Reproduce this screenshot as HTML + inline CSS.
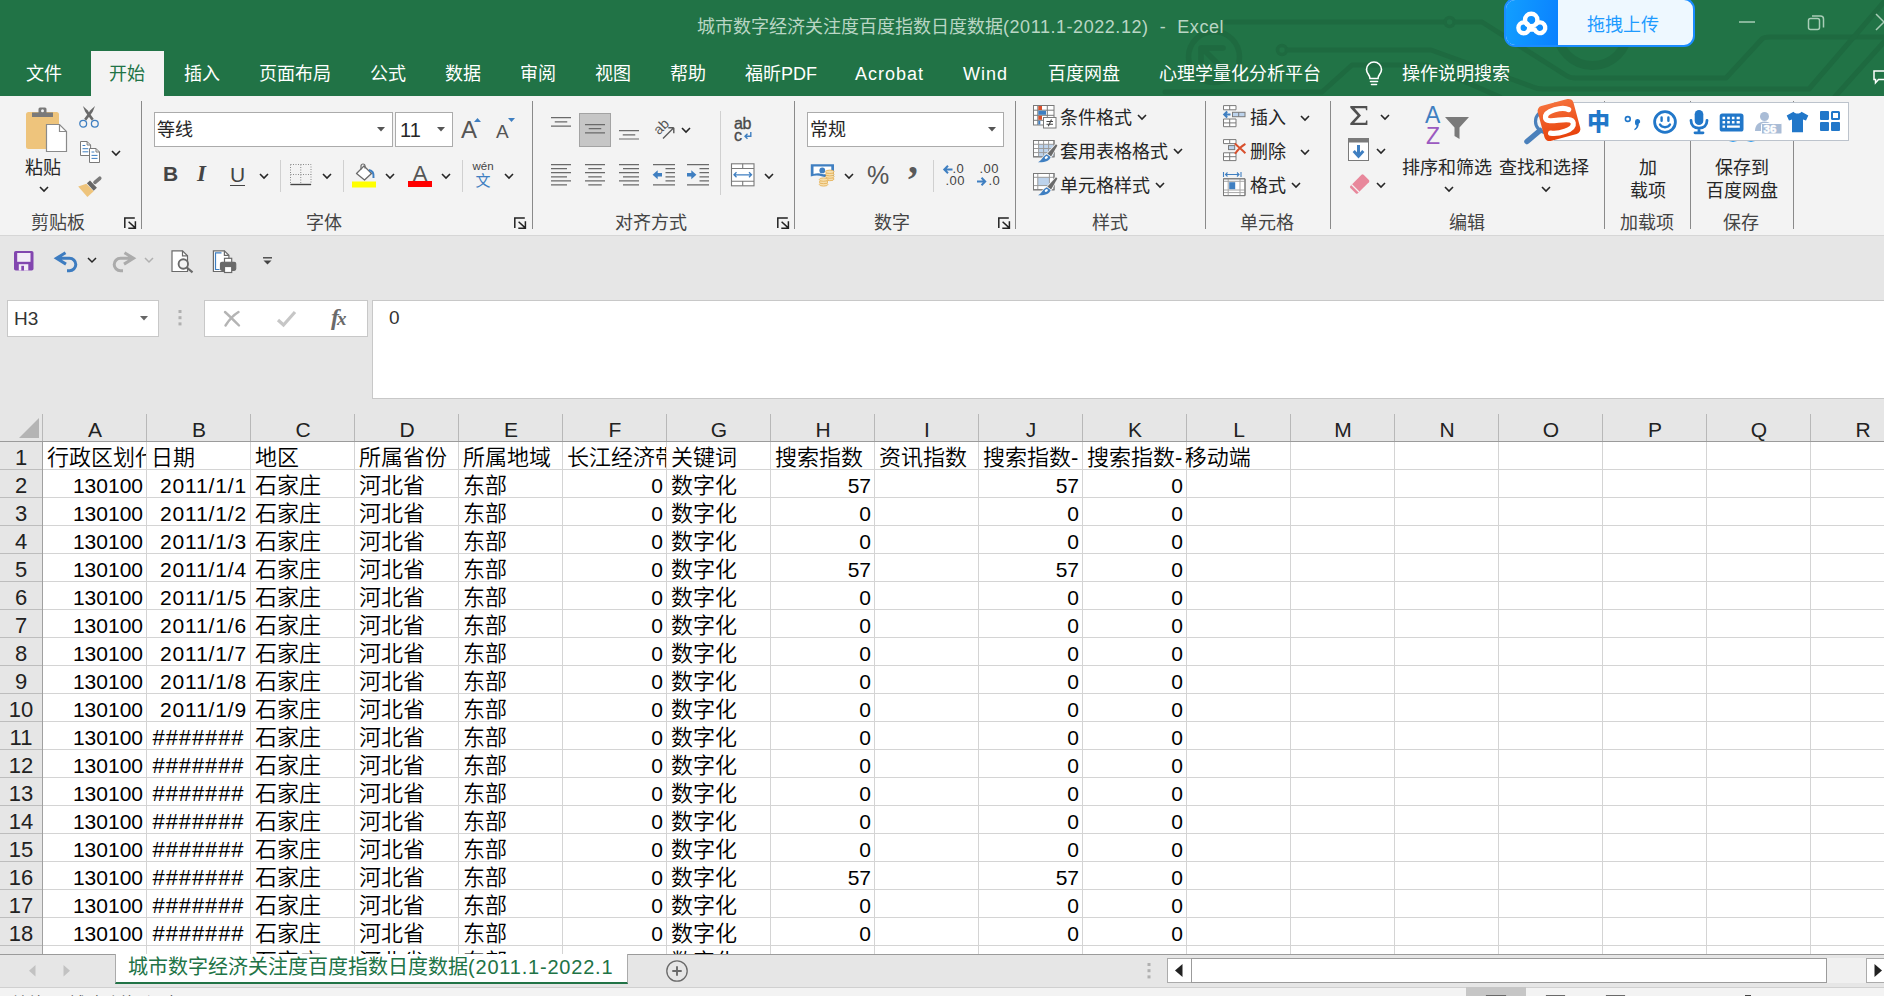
<!DOCTYPE html>
<html lang="zh-CN">
<head>
<meta charset="utf-8">
<title>城市数字经济关注度百度指数日度数据(2011.1-2022.12) - Excel</title>
<style>
*{box-sizing:border-box;margin:0;padding:0}
html,body{width:1884px;height:996px;overflow:hidden;background:#e6e6e6}
body{font-family:"Liberation Sans","Noto Sans CJK SC",sans-serif;color:#262626;position:relative}
.abs{position:absolute}
svg{position:absolute;overflow:visible}
/* ---------- title + tabs ---------- */
#top{position:absolute;left:0;top:0;width:1884px;height:96px;background:#217346;overflow:hidden}
#title{position:absolute;left:697px;top:15px;font-size:18px;line-height:24px;color:#b9d6c4;white-space:nowrap}
.tab{position:absolute;top:61px;font-size:18px;line-height:26px;color:#fff;white-space:nowrap}
#tabsel{position:absolute;left:91px;top:51px;width:73px;height:46px;background:#f3f3f3}
/* ---------- ribbon ---------- */
#ribbon{position:absolute;left:0;top:96px;width:1884px;height:140px;background:#f3f3f3;border-bottom:1px solid #d6d6d6}
.gsep{position:absolute;top:5px;width:1px;height:128px;background:#8a8a8a}
.tsep{position:absolute;width:1px;background:#d0d0d0}
.glabel{position:absolute;top:116px;font-size:18px;line-height:22px;color:#444;white-space:nowrap;transform:translateX(-50%)}
.rt{position:absolute;font-size:18px;line-height:22px;color:#262626;white-space:nowrap}
.rc{transform:translateX(-50%)}
.box{position:absolute;background:#fff;border:1px solid #ababab}
/* ---------- QAT / formula ---------- */
#qat{position:absolute;left:0;top:236px;width:1884px;height:179px;background:#e6e6e6}
/* ---------- grid ---------- */
#grid{position:absolute;left:0;top:414px;width:1884px;height:540px;background:#fff;overflow:hidden}
#colhdr{position:absolute;left:0;top:0;width:1884px;height:28px;background:#e6e6e6;border-bottom:1px solid #9b9b9b}
#rowhdr{position:absolute;left:0;top:28px;width:43px;height:512px;background:#e6e6e6;border-right:1px solid #a0a0a0}
.ch{position:absolute;top:0;width:104px;height:27px;overflow:hidden;text-align:center;font-size:21px;line-height:32px;color:#222}
.cs{position:absolute;top:0;width:1px;height:27px;background:#b8b8b8}
.rh{position:absolute;left:0;width:42px;text-align:center;font-size:22px;line-height:31px;color:#222;height:28px;overflow:hidden;border-bottom:1px solid #bdbdbd}
.vl{position:absolute;top:28px;width:1px;height:512px;background:#d4d4d4}
.hl{position:absolute;left:43px;height:1px;width:1841px;background:#d4d4d4}
.row{position:absolute;left:0;height:28px;width:1884px}
.c{position:absolute;top:0;height:27px;line-height:31px;font-size:22px;color:#000;white-space:nowrap;overflow:hidden}
.n{text-align:right;font-size:21px;padding-right:3px}
.d{letter-spacing:.85px;padding-right:3px}
.h{text-align:center;padding:0;letter-spacing:.9px;font-size:22px}
.t{padding-left:4px;font-weight:350}
/* ---------- bottom ---------- */
#tabbar{position:absolute;left:0;top:954px;width:1884px;height:33px;background:#e6e6e6;border-top:1px solid #9b9b9b}
#status{position:absolute;left:0;top:987px;width:1884px;height:9px;background:#f3f3f3;border-top:1px solid #d0d0d0}
</style>
</head>
<body>
<div id="top">
<svg width="1884" height="96" viewBox="0 0 1884 96" fill="none" stroke="#1e6a40" stroke-width="5" stroke-linecap="round" stroke-linejoin="round">
<path d="M1226 22H1443"/><circle cx="1449.6" cy="22" r="4.5" stroke-width="3.5"/><path d="M1456 22H1482L1567 76Q1570 78 1576 78H1726L1762 39Q1764 37 1770 37H1884"/>
<circle cx="1282" cy="50" r="4.5" stroke-width="3.5"/><path d="M1288 50H1431L1533 87Q1537 89 1543 89H1809L1884 2"/>
<circle cx="1214" cy="57" r="25.5" stroke-width="5.5"/><path d="M1224 70L1202 48M1201 48h22M1201 48v13" stroke-width="5.5"/>
<path d="M1165 92H1322L1352 65H1427L1500 97"/>
<path d="M1832 100L1884 42"/>
<path d="M1557 30A35.5 35.5 0 0 0 1628 30" stroke-width="9"/>
</svg>
<div id="title">城市数字经济关注度百度指数日度数据<span style="letter-spacing:.55px">(2011.1-2022.12)&nbsp; -&nbsp; Excel</span></div>
<div id="tabsel"></div>
<div class="tab" style="left:26px">文件</div>
<div class="tab" style="left:109px;color:#217346">开始</div>
<div class="tab" style="left:184px">插入</div>
<div class="tab" style="left:259px">页面布局</div>
<div class="tab" style="left:370px">公式</div>
<div class="tab" style="left:445px">数据</div>
<div class="tab" style="left:520px">审阅</div>
<div class="tab" style="left:595px">视图</div>
<div class="tab" style="left:670px">帮助</div>
<div class="tab" style="left:745px">福昕PDF</div>
<div class="tab" style="left:855px;letter-spacing:1px">Acrobat</div>
<div class="tab" style="left:963px;letter-spacing:1px">Wind</div>
<div class="tab" style="left:1048px">百度网盘</div>
<div class="tab" style="left:1159px">心理学量化分析平台</div>
<div class="tab" style="left:1402px">操作说明搜索</div>
<svg style="left:1363px;top:61px" width="22" height="26" viewBox="0 0 22 26" fill="none" stroke="#fff" stroke-width="1.6" stroke-linecap="round"><path d="M7 17.5C7 14 3.5 12.5 3.5 8.5a7.5 7.5 0 0 1 15 0C18.5 12.5 15 14 15 17.5Z"/><path d="M7.5 20.5h7M8.5 23.5h5"/></svg>
<!-- baidu netdisk drag-upload widget -->
<div class="abs" style="left:1504px;top:-2px;width:191px;height:49px;border-radius:11px;background:#eef8ff;border:2px solid #1a8cff;overflow:hidden">
<div class="abs" style="left:-2px;top:-2px;width:54px;height:49px;background:linear-gradient(100deg,#12a0ff,#0a80ff)"></div>
<div class="abs" style="left:81px;top:12px;font-size:18px;line-height:26px;color:#1e9bff;white-space:nowrap">拖拽上传</div>
</div>
<svg style="left:1514px;top:8px" width="36" height="30" viewBox="0 0 36 30" fill="none" stroke="#fff" stroke-width="4.4" stroke-linecap="round"><circle cx="17.2" cy="12" r="6.2"/><circle cx="9.8" cy="19.8" r="5.4"/><path d="M20.8 21.5a5.4 5.4 0 1 0 1.2-5.5"/><path d="M14 22.5l3.2-4.5 3.2 4.5Z" fill="#fff" stroke-width="2.5"/></svg>
<!-- window controls -->
<svg style="left:1738px;top:12px" width="150" height="22" viewBox="0 0 150 22" fill="none" stroke="#a9cdb7" stroke-width="1.5"><path d="M1 10h16"/><rect x="70.5" y="6.5" width="11" height="11" rx="2"/><path d="M74 4h8.5a3 3 0 0 1 3 3V15.5"/><path d="M138 2l16 16M154 2l-16 16"/></svg>
<svg style="left:1873px;top:69.5px" width="16" height="16" viewBox="0 0 16 16" fill="none" stroke="#fff" stroke-width="1.5"><path d="M1 1h18v8.5H5.5L2.5 12.8V9.5H1Z"/></svg>
</div>

<div id="ribbon">
<div class="gsep" style="left:141px"></div><div class="gsep" style="left:532px"></div><div class="gsep" style="left:794px"></div><div class="gsep" style="left:1015px"></div><div class="gsep" style="left:1205px"></div><div class="gsep" style="left:1330px"></div><div class="gsep" style="left:1604px"></div><div class="gsep" style="left:1690px"></div><div class="gsep" style="left:1793px"></div>
<svg style="left:24px;top:9px" width="46" height="48" viewBox="0 0 46 48">
<rect x="2" y="7" width="33" height="37" rx="2.5" fill="#eec47c"/>
<path d="M8 12h21V7.5h-6.5V4a1.5 1.5 0 0 0-1.5-1.5h-5a1.5 1.5 0 0 0-1.5 1.5V7.5H8Z" fill="#7a7a7a"/><circle cx="18.5" cy="5.8" r="1.5" fill="#f3f3f3"/>
<path d="M22.5 19.5h13l7 7V46.5h-20Z" fill="#fff" stroke="#8a8a8a" stroke-width="1.2"/><path d="M35.5 19.5v7h7" fill="none" stroke="#8a8a8a" stroke-width="1.2"/>
</svg>
<div class="rt rc" style="left:43px;top:61px">粘贴</div>
<svg style="left:39px;top:90px" width="10" height="7" viewBox="0 0 10 7" fill="none" stroke="#262626" stroke-width="1.6"><path d="M1 1l4 4l4 -4"/></svg>
<svg style="left:78px;top:9px" width="22" height="24" viewBox="0 0 22 24" fill="none">
<path d="M4.9 1.1L9.5 5.2 15.8 14l-2.2 1.6L7.2 6.8Z" fill="#6a6a6a"/><path d="M17 1.1L12.4 5.2 6.1 14l2.2 1.6L14.7 6.8Z" fill="#6a6a6a"/>
<circle cx="5.2" cy="18.7" r="3.4" stroke="#3f7fc1" stroke-width="1.3"/><circle cx="16.8" cy="18.7" r="3.4" stroke="#3f7fc1" stroke-width="1.3"/>
</svg>
<svg style="left:79px;top:44px" width="22" height="24" viewBox="0 0 22 24" fill="#fff" stroke="#7a7a7a" stroke-width="1">
<path d="M1.5 1.5h6.6l3.5 3.5v10.5h-10.1Z"/><path d="M8.1 1.5v3.5h3.5" fill="none"/>
<path d="M10.5 8.5h6.5l3.5 3.5v10.5h-10Z"/><path d="M17 8.5v3.5h3.5" fill="none"/>
<path d="M3.5 5.5h2.8M3.5 8.7h5.8M3.5 11.8h5.8M12.5 12h2.8M12.5 15.4h6M12.5 18.4h6" stroke="#3f7fc1" stroke-width="1" fill="none"/>
</svg>
<svg style="left:111px;top:54px" width="10" height="7" viewBox="0 0 10 7" fill="none" stroke="#262626" stroke-width="1.6"><path d="M1 1l4 4l4 -4"/></svg>
<svg style="left:77px;top:80px" width="26" height="22" viewBox="0 0 26 22">
<path d="M1.2 10.5l8.2-2.7 7.3 7.4-6.3 5.8Z" fill="#eec47c"/>
<path d="M18 6.3l4.700-4" stroke="#7a7a7a" stroke-width="3.7" stroke-linecap="round" fill="none"/><path d="M9.9 7.3l3.100-2.900 6.900 7.400-3.200 2.900Z" fill="#666"/>
</svg>
<div class="glabel" style="left:58px">剪贴板</div>
<svg style="left:124px;top:121px" width="13" height="13" viewBox="0 0 13 13" fill="none" stroke="#222" stroke-width="1.5"><path d="M.8 11V.9h10M4.6 4.8l6.4 5.8M11.4 4.2v7H4.3"/></svg>
<div class="box" style="left:154px;top:16px;width:239px;height:35px"></div><div class="rt" style="left:157px;top:23px">等线</div>
<svg style="left:377px;top:31px" width="8" height="5" viewBox="0 0 8 5"><path d="M0 0h8L4 4.5Z" fill="#555"/></svg>
<div class="box" style="left:395px;top:16px;width:58px;height:35px"></div><div class="rt" style="left:400px;top:23px;font-size:20px">11</div>
<svg style="left:437px;top:31px" width="8" height="5" viewBox="0 0 8 5"><path d="M0 0h8L4 4.5Z" fill="#555"/></svg>
<div class="rt" style="left:461px;top:21px;font-size:24px;line-height:26px;color:#555">A</div>
<svg style="left:474px;top:22px" width="7" height="4" viewBox="0 0 7 4"><path d="M0 4h7L3.5 0Z" fill="#3f7fc1"/></svg>
<div class="rt" style="left:496px;top:24px;font-size:19px;line-height:24px;color:#555">A</div>
<svg style="left:508px;top:22px" width="7" height="4" viewBox="0 0 7 4"><path d="M0 0h7L3.5 4Z" fill="#3f7fc1"/></svg>
<div class="rt" style="left:163px;top:65px;font-size:21px;line-height:26px;font-weight:bold;color:#444">B</div>
<div class="rt" style="left:197px;top:65px;font-size:23px;line-height:26px;font-style:italic;font-weight:bold;font-family:'Liberation Serif',serif;color:#444">I</div>
<div class="rt" style="left:230px;top:66px;font-size:21px;line-height:26px;color:#444;border-bottom:1.5px solid #444;height:24px">U</div>
<svg style="left:259px;top:77px" width="10" height="7" viewBox="0 0 10 7" fill="none" stroke="#262626" stroke-width="1.6"><path d="M1 1l4 4l4 -4"/></svg>
<div class="tsep" style="left:280px;top:64px;height:32px"></div><div class="tsep" style="left:343px;top:64px;height:32px"></div><div class="tsep" style="left:462px;top:64px;height:32px"></div>
<svg style="left:290px;top:68px" width="22" height="22" viewBox="0 0 22 22" fill="none" stroke="#8a8a8a" stroke-width="1" stroke-dasharray="1 1.5">
<path d="M.5.5h20.5v20H.5ZM10.750.5v20M.5 10.5h20.5"/><path d="M.5 20.5h20.5" stroke="#444" stroke-dasharray="none" stroke-width="1.4"/></svg>
<svg style="left:322px;top:77px" width="10" height="7" viewBox="0 0 10 7" fill="none" stroke="#262626" stroke-width="1.6"><path d="M1 1l4 4l4 -4"/></svg>
<svg style="left:352px;top:67px" width="25" height="25" viewBox="0 0 25 25" fill="none">
<rect x="0" y="18.5" width="24" height="6" fill="#ffff00"/>
<path d="M4.5 10.5L12 3l7.5 7.5-7 6.5Z" fill="#fff" stroke="#6a6a6a" stroke-width="1.3" stroke-linejoin="round"/>
<path d="M9 6.5V3a2 2 0 0 1 4 0v2.5" stroke="#6a6a6a" stroke-width="1.2"/>
<path d="M17 7c3.5.5 5 3.5 4.5 8" stroke="#3f7fc1" stroke-width="2"/>
</svg>
<svg style="left:385px;top:77px" width="10" height="7" viewBox="0 0 10 7" fill="none" stroke="#262626" stroke-width="1.6"><path d="M1 1l4 4l4 -4"/></svg>
<div class="rt" style="left:408px;top:63px;font-size:22px;line-height:30px;color:#555;width:24px;text-align:center">A</div>
<div class="abs" style="left:408px;top:85px;width:24px;height:6px;background:#ff0000"></div>
<svg style="left:441px;top:77px" width="10" height="7" viewBox="0 0 10 7" fill="none" stroke="#262626" stroke-width="1.6"><path d="M1 1l4 4l4 -4"/></svg>
<div class="rt" style="left:483px;top:63px;font-size:11.5px;line-height:14px;color:#444;transform:translateX(-50%)">wén</div>
<div class="rt" style="left:483px;top:75px;font-size:15px;line-height:19px;color:#3f7fc1;transform:translateX(-50%)">文</div>
<svg style="left:504px;top:77px" width="10" height="7" viewBox="0 0 10 7" fill="none" stroke="#262626" stroke-width="1.6"><path d="M1 1l4 4l4 -4"/></svg>
<div class="glabel" style="left:324px">字体</div>
<svg style="left:514px;top:121px" width="13" height="13" viewBox="0 0 13 13" fill="none" stroke="#222" stroke-width="1.5"><path d="M.8 11V.9h10M4.6 4.8l6.4 5.8M11.4 4.2v7H4.3"/></svg>
<svg style="left:551px;top:21.3px" width="20" height="14" viewBox="0 0 20 14" fill="none" stroke="#6a6a6a" stroke-width="1.2"><path d="M0 0.6h20M3.75 4.9h12.5M0 9.2h20"/></svg>
<div class="abs" style="left:579px;top:17px;width:32px;height:34px;background:#c6c6c6;border:1px solid #a3a3a3"></div>
<svg style="left:585px;top:28px" width="20" height="14" viewBox="0 0 20 14" fill="none" stroke="#6a6a6a" stroke-width="1.2"><path d="M0 0.6h20M3.75 4.7h12.5M0 8.8h20"/></svg>
<svg style="left:619px;top:33.6px" width="20" height="14" viewBox="0 0 20 14" fill="none" stroke="#6a6a6a" stroke-width="1.2"><path d="M0 0.6h20M3.75 4.8h12.5M0 9h20"/></svg>
<svg style="left:653px;top:20px" width="24" height="24" viewBox="0 0 24 24" fill="none" stroke="#5a5a5a" stroke-width="1.4">
<g transform="translate(6 19.5) rotate(-45)"><text x="0" y="0" font-family="Liberation Sans, sans-serif" font-size="14" fill="#555" stroke="none">ab</text></g>
<path d="M10 22.5L20.5 12M20.8 11.7h-5.5M20.8 11.7v5.5"/></svg>
<svg style="left:681px;top:31px" width="10" height="7" viewBox="0 0 10 7" fill="none" stroke="#262626" stroke-width="1.6"><path d="M1 1l4 4l4 -4"/></svg>
<div class="tsep" style="left:720px;top:15px;height:84px"></div>
<div class="rt" style="left:734px;top:22px;font-size:16px;line-height:12px;color:#4a4a4a;-webkit-text-stroke:.35px #4a4a4a;letter-spacing:-.4px">ab<br>c</div>
<svg style="left:744px;top:36px" width="8" height="8" viewBox="0 0 8 8" fill="none" stroke="#3f7fc1" stroke-width="1.4"><path d="M6.8 0v4.3H1.2M3.5 1.8L1 4.3 3.5 6.8"/></svg>
<svg style="left:551px;top:67.6px" width="20" height="26" viewBox="0 0 20 26" fill="none" stroke="#6a6a6a" stroke-width="1.2"><path d="M0 0.6h20M0 4.66h16M0 8.72h20M0 12.78h16M0 16.84h20M0 20.9h16"/></svg>
<svg style="left:585px;top:67.6px" width="20" height="26" viewBox="0 0 20 26" fill="none" stroke="#6a6a6a" stroke-width="1.2"><path d="M0 0.6h20M3.25 4.66h13.5M0 8.72h20M3.25 12.78h13.5M0 16.84h20M3.25 20.9h13.5"/></svg>
<svg style="left:619px;top:67.6px" width="20" height="26" viewBox="0 0 20 26" fill="none" stroke="#6a6a6a" stroke-width="1.2"><path d="M0 0.6h20M4 4.66h16M0 8.72h20M4 12.78h16M0 16.84h20M4 20.9h16"/></svg>
<svg style="left:653px;top:67.6px" width="22" height="22" viewBox="0 0 22 22" fill="none" stroke="#6a6a6a" stroke-width="1.2"><path d="M0 0.6h22M12.5 4.66h9.5M12.5 8.72h9.5M12.5 12.78h9.5M12.5 16.84h9.5M0 20.9h22"/><path d="M9 9v3.4H4.7v2.8L-.4 10.7 4.7 6.2V9Z" fill="#3f7fc1" stroke="none"/></svg>
<svg style="left:687px;top:67.6px" width="22" height="22" viewBox="0 0 22 22" fill="none" stroke="#6a6a6a" stroke-width="1.2"><path d="M0 0.6h22M12.5 4.66h9.5M12.5 8.72h9.5M12.5 12.78h9.5M12.5 16.84h9.5M0 20.9h22"/><path d="M0 9v3.4H4.3v2.8L9.4 10.7 4.3 6.2V9Z" fill="#3f7fc1" stroke="none"/></svg>
<svg style="left:731px;top:67px" width="24" height="24" viewBox="0 0 24 24" fill="#fff" stroke="#7a7a7a" stroke-width="1.1">
<rect x=".5" y=".8" width="22.5" height="22"/><path d="M.5 5.5h22.5M.5 18.2h22.5M11.7 .8v4.7M11.7 18.2v4.6" fill="none"/>
<path d="M3 11.8h17.5M5.5 9.3L3 11.8l2.5 2.5M18 9.3l2.5 2.5-2.5 2.5" stroke="#3f7fc1" stroke-width="1.3" fill="none"/></svg>
<svg style="left:764px;top:77px" width="10" height="7" viewBox="0 0 10 7" fill="none" stroke="#262626" stroke-width="1.6"><path d="M1 1l4 4l4 -4"/></svg>
<div class="glabel" style="left:651px">对齐方式</div>
<svg style="left:777px;top:121px" width="13" height="13" viewBox="0 0 13 13" fill="none" stroke="#222" stroke-width="1.5"><path d="M.8 11V.9h10M4.6 4.8l6.4 5.8M11.4 4.2v7H4.3"/></svg>
<div class="box" style="left:807px;top:16px;width:197px;height:35px"></div><div class="rt" style="left:810px;top:23px">常规</div>
<svg style="left:988px;top:31px" width="8" height="5" viewBox="0 0 8 5"><path d="M0 0h8L4 4.5Z" fill="#555"/></svg>
<svg style="left:810px;top:67px" width="26" height="24" viewBox="0 0 26 24">
<path d="M.8 1.2h23.2v12.4c-4-1.6-7.6 1.4-11.6 0s-7.6-1.2-11.6 0Z" fill="#3f7fc1"/><path d="M3.5 3.6h17.8v7.2c-3-.8-6 1.2-9 .2s-6-.8-8.8 0Z" fill="#fff"/><circle cx="12.3" cy="7.4" r="2.9" fill="#3f7fc1"/>
<g fill="#f6dfae" stroke="#e5b25a" stroke-width=".9"><ellipse cx="19.8" cy="16" rx="4.3" ry="1.7"/><ellipse cx="19.8" cy="13.6" rx="4.3" ry="1.7"/><ellipse cx="19.8" cy="11.2" rx="4.3" ry="1.7"/><ellipse cx="19.8" cy="8.8" rx="4.3" ry="1.7"/><ellipse cx="13.6" cy="21.4" rx="4.3" ry="1.7"/><ellipse cx="13.6" cy="19" rx="4.3" ry="1.7"/><ellipse cx="13.6" cy="16.6" rx="4.3" ry="1.7"/></g></svg>
<svg style="left:844px;top:77px" width="10" height="7" viewBox="0 0 10 7" fill="none" stroke="#262626" stroke-width="1.6"><path d="M1 1l4 4l4 -4"/></svg>
<div class="rt" style="left:867px;top:64px;font-size:25px;line-height:30px;color:#555">%</div>
<div class="rt" style="left:908px;top:46px;font-size:40px;line-height:36px;color:#5a5a5a;font-family:'Liberation Serif',serif;font-weight:bold">,</div>
<div class="tsep" style="left:933px;top:64px;height:32px"></div>
<div class="rt" style="left:952.5px;top:67px;font-size:13px;line-height:12px;color:#444;letter-spacing:.5px">.0<br><span style="margin-left:-7px">.00</span></div>
<svg style="left:943px;top:69px" width="10" height="9" viewBox="0 0 10 9" fill="none" stroke="#3f7fc1" stroke-width="2"><path d="M9.5 4.5H1.5M5 .8L1.3 4.5 5 8.2"/></svg>
<div class="rt" style="left:979.5px;top:67px;font-size:13px;line-height:12px;color:#444;letter-spacing:.5px">.00<br><span style="margin-left:9px">.0</span></div>
<svg style="left:977px;top:81px" width="10" height="9" viewBox="0 0 10 9" fill="none" stroke="#3f7fc1" stroke-width="2"><path d="M0 4.5H8M4.5 .8L8.2 4.5 4.5 8.2"/></svg>
<div class="glabel" style="left:892px">数字</div>
<svg style="left:998px;top:121px" width="13" height="13" viewBox="0 0 13 13" fill="none" stroke="#222" stroke-width="1.5"><path d="M.8 11V.9h10M4.6 4.8l6.4 5.8M11.4 4.2v7H4.3"/></svg>
<svg style="left:1033px;top:9px" width="24" height="24" viewBox="0 0 24 24" fill="#fff" stroke="#7a7a7a" stroke-width="1">
<rect x=".5" y=".5" width="20.5" height="19.5"/><path d="M.5 5.2h20.5M.5 10.3h20.5M.5 15.3h20.5M4.8 .5v19.5M14.3 .5v19.5" fill="none"/>
<rect x="5.3" y="1" width="3.7" height="4" fill="#d8502d" stroke="none"/><rect x="5.3" y="5.8" width="7.7" height="4" fill="#3f7fc1" stroke="none"/><rect x="5.3" y="10.8" width="3.7" height="4" fill="#d8502d" stroke="none"/><rect x="5.3" y="15.8" width="2" height="3.7" fill="#3f7fc1" stroke="none"/>
<rect x="10.5" y="12.5" width="12.5" height="10.5" fill="#fff"/><path d="M13.5 16.5h6.5M13.5 19.3h6.5M18.5 14.5l-3.2 6.8" fill="none" stroke="#444" stroke-width="1.1"/></svg>
<div class="rt" style="left:1060px;top:11px">条件格式</div>
<svg style="left:1137px;top:18px" width="10" height="7" viewBox="0 0 10 7" fill="none" stroke="#262626" stroke-width="1.6"><path d="M1 1l4 4l4 -4"/></svg>
<svg style="left:1033px;top:44px" width="24" height="24" viewBox="0 0 24 24" fill="#fff" stroke="#7a7a7a" stroke-width="1">
<rect x=".5" y=".5" width="20.5" height="16.3"/><rect x="5.6" y="4.3" width="15.4" height="12.5" fill="#bdd3ec" stroke="none"/><path d="M.5 4.3h20.5M.5 8.5h20.5M.5 12.6h20.5M5.6 .5v16.3M10.6 .5v16.3M15.6 .5v16.3" fill="none" stroke="#9a9a9a"/><rect x=".5" y=".5" width="20.5" height="16.3" fill="none"/>
<path d="M23 4.2l1.4 1.2-6.3 11.2-3.8-2.8Z" fill="#6a6a6a" stroke="#f3f3f3" stroke-width="1.6" style="paint-order:stroke"/>
<path d="M13.8 14.3l3.8 2.8c-.8 3.8-5.8 5.6-12.6 5.2 3.6-1.4 4-5.6 8.8-8Z" fill="#3f7fc1" stroke="#f3f3f3" stroke-width="1.6" style="paint-order:stroke"/><ellipse cx="13.3" cy="17.5" rx="1.7" ry="1.2" fill="#fff" stroke="none" transform="rotate(-35 13.3 17.5)"/></svg>
<div class="rt" style="left:1060px;top:45px">套用表格格式</div>
<svg style="left:1173px;top:52px" width="10" height="7" viewBox="0 0 10 7" fill="none" stroke="#262626" stroke-width="1.6"><path d="M1 1l4 4l4 -4"/></svg>
<svg style="left:1033px;top:77px" width="24" height="24" viewBox="0 0 24 24" fill="#fff" stroke="#7a7a7a" stroke-width="1">
<rect x=".5" y=".5" width="20.5" height="16.3"/><rect x="4.8" y="4.3" width="11.6" height="8.3" fill="#bdd3ec" stroke="none"/><path d="M.5 4.3h20.5M.5 12.6h20.5M4.8 .5v16.3M16.4 .5v16.3" fill="none" stroke="#9a9a9a"/><rect x=".5" y=".5" width="20.5" height="16.3" fill="none"/>
<path d="M23 4.2l1.4 1.2-6.3 11.2-3.8-2.8Z" fill="#6a6a6a" stroke="#f3f3f3" stroke-width="1.6" style="paint-order:stroke"/>
<path d="M13.8 14.3l3.8 2.8c-.8 3.8-5.8 5.6-12.6 5.2 3.6-1.4 4-5.6 8.8-8Z" fill="#3f7fc1" stroke="#f3f3f3" stroke-width="1.6" style="paint-order:stroke"/><ellipse cx="13.3" cy="17.5" rx="1.7" ry="1.2" fill="#fff" stroke="none" transform="rotate(-35 13.3 17.5)"/></svg>
<div class="rt" style="left:1060px;top:79px">单元格样式</div>
<svg style="left:1155px;top:86px" width="10" height="7" viewBox="0 0 10 7" fill="none" stroke="#262626" stroke-width="1.6"><path d="M1 1l4 4l4 -4"/></svg>
<div class="glabel" style="left:1110px">样式</div>
<svg style="left:1223px;top:9px" width="23" height="23" viewBox="0 0 23 23" fill="#fff" stroke="#7a7a7a" stroke-width="1">
<path d="M.5 .6h12.5v4.2h-12.5ZM6.7 .6v4.2M.5 14h12.5v7.7h-12.5ZM.5 17.9h12.5M6.7 14v7.7"/>
<rect x="9.5" y="7.3" width="12.5" height="4.4" fill="#bdd3ec"/><path d="M15.7 7.3v4.4" fill="none"/>
<path d="M7.5 9.5H1.5M4.2 6.5L1.2 9.5l3 3" stroke="#3f7fc1" stroke-width="2" fill="none"/></svg>
<div class="rt" style="left:1250px;top:11px">插入</div>
<svg style="left:1223px;top:43px" width="24" height="23" viewBox="0 0 24 23" fill="#fff" stroke="#7a7a7a" stroke-width="1">
<path d="M.5 .6h12.5v4h-12.5ZM6.7 .6v4M.5 13.8h12.5v7.8h-12.5ZM.5 17.7h12.5M6.7 13.8v7.8"/>
<rect x="5.5" y="6.6" width="6.2" height="4" fill="#bdd3ec"/>
<path d="M11.8 4.4c3 2.6 6.5 6 10.6 9.8M22.4 4.8c-4.5 2.6-7.8 6-10.4 9.9" stroke="#d8502d" stroke-width="2" fill="none"/></svg>
<div class="rt" style="left:1250px;top:45px">删除</div>
<svg style="left:1223px;top:77px" width="23" height="24" viewBox="0 0 23 24" fill="#fff" stroke="#7a7a7a" stroke-width="1">
<path d="M.5 5.8h21.5v16.8h-21.5Z"/><path d="M.5 8.3h21.5M.5 17h21.5M.5 19.6h21.5M5.2 5.8v16.8M17 5.8v16.8" fill="none" stroke="#a6a6a6"/><path d="M.5 5.8h21.5v16.8h-21.5Z" fill="none"/>
<rect x="6.2" y="9.2" width="6" height="7" fill="#3f7fc1" stroke="none"/>
<path d="M.5 -1v5M18 -1v5M2 1.5h14.5M4.5 -.5l-2 2 2 2M14 -.5l2 2-2 2" stroke="#3f7fc1" stroke-width="1.1" fill="none"/></svg>
<div class="rt" style="left:1250px;top:79px">格式</div>
<svg style="left:1300px;top:19px" width="10" height="7" viewBox="0 0 10 7" fill="none" stroke="#262626" stroke-width="1.6"><path d="M1 1l4 4l4 -4"/></svg>
<svg style="left:1300px;top:53px" width="10" height="7" viewBox="0 0 10 7" fill="none" stroke="#262626" stroke-width="1.6"><path d="M1 1l4 4l4 -4"/></svg>
<svg style="left:1291px;top:86px" width="10" height="7" viewBox="0 0 10 7" fill="none" stroke="#262626" stroke-width="1.6"><path d="M1 1l4 4l4 -4"/></svg>
<div class="glabel" style="left:1267px">单元格</div>
<svg style="left:1350px;top:10px" width="18" height="19" viewBox="0 0 18 19"><path d="M.3 0h17v4.2h-1.3l-.4-2H4.6l6.4 7.2-6.7 7.4h11.3l.5-2.3h1.3v4.5H.3v-1.7l7.2-7.9L.3 1.7Z" fill="#505050"/></svg>
<svg style="left:1348px;top:42px" width="21" height="23" viewBox="0 0 21 23" fill="#fff" stroke="#7a7a7a" stroke-width="1">
<rect x=".5" y=".5" width="20" height="22"/><rect x=".5" y=".5" width="20" height="3.5" fill="#7a7a7a"/>
<path d="M10.5 7v11.5M5.7 13l4.8 5.2 4.8-5.2" stroke="#3f7fc1" stroke-width="3" fill="none"/></svg>
<svg style="left:1348px;top:78px" width="22" height="20" viewBox="0 0 22 20"><path d="M13.5 .8a1.5 1.5 0 0 1 2.1 0l5.3 5.3a1.5 1.5 0 0 1 0 2.1L9.8 19.3a1.5 1.5 0 0 1-2.1 0L2.4 14a1.5 1.5 0 0 1 0-2.1Z" fill="#e8879b"/><path d="M3.5 10.5l7.5 7.5" stroke="#f3f3f3" stroke-width="1.3"/></svg>
<svg style="left:1380px;top:18px" width="10" height="7" viewBox="0 0 10 7" fill="none" stroke="#262626" stroke-width="1.6"><path d="M1 1l4 4l4 -4"/></svg>
<svg style="left:1376px;top:52px" width="10" height="7" viewBox="0 0 10 7" fill="none" stroke="#262626" stroke-width="1.6"><path d="M1 1l4 4l4 -4"/></svg>
<svg style="left:1376px;top:86px" width="10" height="7" viewBox="0 0 10 7" fill="none" stroke="#262626" stroke-width="1.6"><path d="M1 1l4 4l4 -4"/></svg>
<div class="rt" style="left:1425px;top:8px;font-size:23px;line-height:22px;color:#3f7fc1">A</div>
<div class="rt" style="left:1426px;top:29px;font-size:23px;line-height:22px;color:#9b59c0">Z</div>
<svg style="left:1445px;top:21px" width="24" height="23" viewBox="0 0 24 23"><path d="M0 0h24L14.5 10.5V22l-5-3V10.5Z" fill="#7a7a7a"/></svg>
<div class="rt rc" style="left:1447px;top:61px">排序和筛选</div>
<div class="rt rc" style="left:1544px;top:61px">查找和选择</div>
<svg style="left:1522px;top:14px" width="40" height="40" viewBox="0 0 40 40" fill="none"><circle cx="24.5" cy="11.5" r="11" stroke="#4a80bb" stroke-width="3.2"/><path d="M18 20.5L5 31.5" stroke="#4a80bb" stroke-width="5.5" stroke-linecap="round"/></svg>
<svg style="left:1444px;top:90px" width="10" height="7" viewBox="0 0 10 7" fill="none" stroke="#262626" stroke-width="1.6"><path d="M1 1l4 4l4 -4"/></svg>
<svg style="left:1541px;top:90px" width="10" height="7" viewBox="0 0 10 7" fill="none" stroke="#262626" stroke-width="1.6"><path d="M1 1l4 4l4 -4"/></svg>
<div class="glabel" style="left:1467px">编辑</div>
<div class="rt rc" style="left:1648px;top:61px;text-align:center;line-height:23px">加<br>载项</div>
<div class="glabel" style="left:1647px">加载项</div>
<svg style="left:1722px;top:31px" width="40" height="16" viewBox="0 0 40 16" fill="none" stroke="#2a9bf0" stroke-width="4"><path d="M3 5a8 8 0 0 0 16 0M21 5a8 8 0 0 0 16 0"/></svg>
<div class="rt rc" style="left:1742px;top:61px;text-align:center;line-height:23px">保存到<br>百度网盘</div>
<div class="glabel" style="left:1741px">保存</div>
<!-- sogou IME bar -->
<div class="abs" style="left:1554px;top:6px;width:295px;height:39px;background:#fff;border:1px solid #bcc3cc"></div>
<svg style="left:1534px;top:0px" width="52" height="50" viewBox="0 0 52 50">
<defs><linearGradient id="sg" x1="0" y1="0" x2="0" y2="1"><stop offset="0" stop-color="#f5703a"/><stop offset="1" stop-color="#e8420c"/></linearGradient></defs>
<g transform="rotate(-15 25 24)"><rect x="6.5" y="6" width="37" height="36" rx="5" fill="url(#sg)"/>
<path d="M37 16.5C32 12 13.5 11 12.5 18.5 11.5 26 38.5 22 38 30.5 37.5 38 20 37.5 13.5 34.5" fill="none" stroke="#fff" stroke-width="5.2" stroke-linecap="round"/></g></svg>
<div class="rt" style="left:1587px;top:14px;font-size:23px;line-height:24px;font-weight:900;color:#2177c9">中</div>
<svg style="left:1624px;top:19px" width="18" height="18" viewBox="0 0 18 18"><circle cx="3.8" cy="4" r="2.4" fill="none" stroke="#2177c9" stroke-width="1.6"/><path d="M11 6.5a2.6 2.6 0 1 1 3.8 2.3c0 3-1.3 5-4 6.4l-.6-1c1.6-1 2.3-2.2 2.4-3.6A2.6 2.6 0 0 1 11 8.3Z" fill="#2177c9"/></svg>
<svg style="left:1653px;top:14px" width="24" height="24" viewBox="0 0 24 24" fill="none" stroke="#2177c9" stroke-width="2.8" stroke-linecap="round"><circle cx="12" cy="12" r="10.4"/><path d="M8.6 7.500v3.2M15.4 7.500v3.2M7 14.500c2 3.600 8 3.600 10 0" stroke-width="2.4"/></svg>
<svg style="left:1689px;top:13px" width="20" height="26" viewBox="0 0 20 26" fill="none" stroke="#2177c9" stroke-width="2.8" stroke-linecap="round"><rect x="5.7" y="1" width="8.6" height="15" rx="4.3" fill="#2177c9" stroke="none"/><path d="M2 11.5c0 4.800 3.200 7.600 8 7.600s8-2.800 8-7.600M10 19.5v3.5M6 23.800h8"/></svg>
<svg style="left:1719px;top:17px" width="26" height="19" viewBox="0 0 26 19"><rect x=".7" y=".5" width="23.8" height="18" rx="2.6" fill="#2177c9"/><path d="M3.5 5h2.600M8.200 5h2.600M12.900 5h2.600M17.600 5h3.200M3.5 9.200h2.600M8.200 9.200h2.600M12.900 9.200h2.600M17.600 9.200h3.200M3.5 13.600h2.600M8 13.600h12.800" stroke="#fff" stroke-width="2.4" fill="none"/></svg>
<svg style="left:1754px;top:15px" width="29" height="24" viewBox="0 0 29 24" fill="#a9bcd6"><circle cx="10.5" cy="5.5" r="4.5"/><path d="M1 20c0-6 4-9.5 9.5-9.5S20 14 20 20Z"/><rect x="7.5" y="12.5" width="20.5" height="10.5" rx="1" stroke="#fff" stroke-width="1"/><text x="9.5" y="22" font-family="Liberation Sans, sans-serif" font-weight="bold" font-size="11.5" fill="#fff" stroke="#fff" stroke-width=".5">36</text></svg>
<svg style="left:1786px;top:15px" width="23" height="22" viewBox="0 0 23 22"><path d="M7.5 .8c1 2.4 7 2.4 8 0l6.8 3.6-2.3 5.2-3-1.2V21.2H6V8.4l-3 1.2L.7 4.4Z" fill="#2177c9"/></svg>
<svg style="left:1820px;top:15px" width="21" height="21" viewBox="0 0 21 21" fill="#2177c9"><rect x="0" y="0" width="9" height="9" rx="1"/><rect x="0" y="11" width="9" height="9" rx="1"/><rect x="11" y="11" width="9" height="9" rx="1"/><rect x="12" y="1" width="7" height="7" rx=".5" fill="#fff" stroke="#2177c9" stroke-width="2"/></svg>



</div>

<div id="qat">
<svg style="left:14px;top:14.5px" width="20" height="20" viewBox="0 0 20 20"><rect x="0" y="0" width="19.5" height="19.5" rx="1.8" fill="#8246af"/><rect x="3.2" y="2" width="13.3" height="8.8" fill="#f3ecf7"/><rect x="4.8" y="13.2" width="9.5" height="6.3" fill="#f3ecf7"/><rect x="7.3" y="14.8" width="2.7" height="4.7" fill="#8246af"/></svg>
<svg style="left:54px;top:15px" width="25" height="22" viewBox="0 0 25 22" fill="none" stroke="#3d7cc0" stroke-width="3" stroke-linejoin="miter"><path d="M11.5 1.7L2.5 7.3l9.5 5.8M3 7.3H15.5a6.3 6.2 0 0 1 0 12.4h-2.5"/></svg>
<svg style="left:111px;top:15px" width="25" height="22" viewBox="0 0 25 22" fill="none" stroke="#ababab" stroke-width="3" stroke-linejoin="miter"><path d="M13.5 1.7L22.5 7.3l-9.5 5.8M22 7.3H9.5a6.3 6.2 0 0 0 0 12.4h2.5"/></svg>
<svg style="left:87px;top:21px" width="10" height="7" viewBox="0 0 10 7" fill="none" stroke="#262626" stroke-width="1.5"><path d="M1 1l4 4 4-4"/></svg>
<svg style="left:144px;top:21px" width="10" height="7" viewBox="0 0 10 7" fill="none" stroke="#b0b0b0" stroke-width="1.5"><path d="M1 1l4 4 4-4"/></svg>
<svg style="left:171px;top:14px" width="24" height="23" viewBox="0 0 24 23" fill="#fff" stroke="#6a6a6a" stroke-width="1.2"><path d="M1 .8h10.5l5 5V21.5H1Z"/><path d="M11.5 .8v5h5" fill="none"/><circle cx="12.3" cy="14" r="4.7" stroke-width="1.9" fill="#f4f4f4"/><path d="M15.8 17.5l5.7 4.8" stroke-width="2.2" fill="none"/></svg>
<svg style="left:212px;top:14px" width="26" height="24" viewBox="0 0 26 24" fill="#fff" stroke="#6a6a6a" stroke-width="1.2"><path d="M1.4 .8h11l4.5 4.5V21.5H1.4Z"/><path d="M9.5 2.8H3.5V19.5h4" stroke="#3f7fc1" fill="none"/><path d="M12.4 .8v4.5h4.5" fill="none"/><rect x="8.5" y="12.3" width="15.2" height="8" rx="1.5" fill="#6a6a6a"/><rect x="12.5" y="8.3" width="7.2" height="4" /><rect x="12.5" y="16.5" width="7.2" height="6"/></svg>
<svg style="left:263px;top:21px" width="9" height="8" viewBox="0 0 9 8"><path d="M0 .8h9" stroke="#444" stroke-width="1.4"/><path d="M.5 3.5h8L4.5 7.5Z" fill="#444"/></svg>
<div class="box" style="left:7px;top:64px;width:152px;height:37px;border-color:#c8c8c8"></div>
<div class="rt" style="left:14px;top:72px;font-size:19px;line-height:22px;color:#333">H3</div>
<svg style="left:140px;top:80px" width="8" height="5" viewBox="0 0 8 5"><path d="M0 0h8L4 4.5Z" fill="#666"/></svg>
<svg style="left:178px;top:74px" width="4" height="16" viewBox="0 0 4 16" fill="#b0b0b0"><rect x=".5" y="0" width="3" height="3"/><rect x=".5" y="6.2" width="3" height="3"/><rect x=".5" y="12.4" width="3" height="3"/></svg>
<div class="box" style="left:204px;top:64px;width:164px;height:37px;border-color:#c8c8c8"></div>
<svg style="left:223px;top:74px" width="18" height="17" viewBox="0 0 18 17" fill="none" stroke="#b4b4b4" stroke-width="2.4" stroke-linecap="round"><path d="M2 2c4 3.5 9 8.5 14 13.5M15.5 2C10.5 5 6 10 2.5 15.5"/></svg>
<svg style="left:277px;top:75px" width="19" height="16" viewBox="0 0 19 16" fill="none" stroke="#c6c6c6" stroke-width="3.2"><path d="M1 9l5.5 5L18 1"/></svg>
<div class="rt" style="left:331px;top:67px;font-size:24px;line-height:28px;font-style:italic;font-family:'Liberation Serif',serif;color:#6a6a6a;font-weight:bold">f<span style="font-size:19px;margin-left:-2px">x</span></div>
<div class="box" style="left:372px;top:64px;width:1520px;height:99px;border-color:#c8c8c8"></div>
<div class="rt" style="left:389px;top:71px;font-size:19px;line-height:22px;color:#333">0</div>
</div>

<div id="grid">
<div id="colhdr"><div class="ch" style="left:43px">A</div><div class="ch" style="left:147px">B</div><div class="ch" style="left:251px">C</div><div class="ch" style="left:355px">D</div><div class="ch" style="left:459px">E</div><div class="ch" style="left:563px">F</div><div class="ch" style="left:667px">G</div><div class="ch" style="left:771px">H</div><div class="ch" style="left:875px">I</div><div class="ch" style="left:979px">J</div><div class="ch" style="left:1083px">K</div><div class="ch" style="left:1187px">L</div><div class="ch" style="left:1291px">M</div><div class="ch" style="left:1395px">N</div><div class="ch" style="left:1499px">O</div><div class="ch" style="left:1603px">P</div><div class="ch" style="left:1707px">Q</div><div class="ch" style="left:1811px">R</div><div class="cs" style="left:42px"></div><div class="cs" style="left:146px"></div><div class="cs" style="left:250px"></div><div class="cs" style="left:354px"></div><div class="cs" style="left:458px"></div><div class="cs" style="left:562px"></div><div class="cs" style="left:666px"></div><div class="cs" style="left:770px"></div><div class="cs" style="left:874px"></div><div class="cs" style="left:978px"></div><div class="cs" style="left:1082px"></div><div class="cs" style="left:1186px"></div><div class="cs" style="left:1290px"></div><div class="cs" style="left:1394px"></div><div class="cs" style="left:1498px"></div><div class="cs" style="left:1602px"></div><div class="cs" style="left:1706px"></div><div class="cs" style="left:1810px"></div><div class="cs" style="left:1914px"></div><svg style="left:19px;top:4px" width="21" height="20" viewBox="0 0 21 20"><path d="M20 0V20H0Z" fill="#b4b4b4"/></svg></div>
<div class="vl" style="left:146px"></div><div class="vl" style="left:250px"></div><div class="vl" style="left:354px"></div><div class="vl" style="left:458px"></div><div class="vl" style="left:562px"></div><div class="vl" style="left:666px"></div><div class="vl" style="left:770px"></div><div class="vl" style="left:874px"></div><div class="vl" style="left:978px"></div><div class="vl" style="left:1082px"></div><div class="vl" style="left:1186px"></div><div class="vl" style="left:1290px"></div><div class="vl" style="left:1394px"></div><div class="vl" style="left:1498px"></div><div class="vl" style="left:1602px"></div><div class="vl" style="left:1706px"></div><div class="vl" style="left:1810px"></div><div class="vl" style="left:1914px"></div>
<div class="hl" style="top:55px"></div><div class="hl" style="top:83px"></div><div class="hl" style="top:111px"></div><div class="hl" style="top:139px"></div><div class="hl" style="top:167px"></div><div class="hl" style="top:195px"></div><div class="hl" style="top:223px"></div><div class="hl" style="top:251px"></div><div class="hl" style="top:279px"></div><div class="hl" style="top:307px"></div><div class="hl" style="top:335px"></div><div class="hl" style="top:363px"></div><div class="hl" style="top:391px"></div><div class="hl" style="top:419px"></div><div class="hl" style="top:447px"></div><div class="hl" style="top:475px"></div><div class="hl" style="top:503px"></div><div class="hl" style="top:531px"></div><div class="hl" style="top:559px"></div>
<div class="row" style="top:28px"><div class="c t" style="left:43px;width:103px">行政区划代码</div><div class="c t" style="left:147px;width:103px">日期</div><div class="c t" style="left:251px;width:103px">地区</div><div class="c t" style="left:355px;width:103px">所属省份</div><div class="c t" style="left:459px;width:103px">所属地域</div><div class="c t" style="left:563px;width:103px">长江经济带</div><div class="c t" style="left:667px;width:103px">关键词</div><div class="c t" style="left:771px;width:103px">搜索指数</div><div class="c t" style="left:875px;width:103px">资讯指数</div><div class="c t" style="left:979px;width:100px">搜索指数-PC端</div><div class="c t" style="left:1083px;width:103px;width:220px;overflow:visible">搜索指数<span style="padding-right:2.5px">-</span>移动端</div></div>
<div class="row" style="top:56px"><div class="c n" style="left:43px;width:103px">130100</div><div class="c n d" style="left:147px;width:103px">2011/1/1</div><div class="c t" style="left:251px;width:103px">石家庄</div><div class="c t" style="left:355px;width:103px">河北省</div><div class="c t" style="left:459px;width:103px">东部</div><div class="c n" style="left:563px;width:103px">0</div><div class="c t" style="left:667px;width:103px">数字化</div><div class="c n" style="left:771px;width:103px">57</div><div class="c n" style="left:979px;width:103px">57</div><div class="c n" style="left:1083px;width:103px">0</div></div>
<div class="row" style="top:84px"><div class="c n" style="left:43px;width:103px">130100</div><div class="c n d" style="left:147px;width:103px">2011/1/2</div><div class="c t" style="left:251px;width:103px">石家庄</div><div class="c t" style="left:355px;width:103px">河北省</div><div class="c t" style="left:459px;width:103px">东部</div><div class="c n" style="left:563px;width:103px">0</div><div class="c t" style="left:667px;width:103px">数字化</div><div class="c n" style="left:771px;width:103px">0</div><div class="c n" style="left:979px;width:103px">0</div><div class="c n" style="left:1083px;width:103px">0</div></div>
<div class="row" style="top:112px"><div class="c n" style="left:43px;width:103px">130100</div><div class="c n d" style="left:147px;width:103px">2011/1/3</div><div class="c t" style="left:251px;width:103px">石家庄</div><div class="c t" style="left:355px;width:103px">河北省</div><div class="c t" style="left:459px;width:103px">东部</div><div class="c n" style="left:563px;width:103px">0</div><div class="c t" style="left:667px;width:103px">数字化</div><div class="c n" style="left:771px;width:103px">0</div><div class="c n" style="left:979px;width:103px">0</div><div class="c n" style="left:1083px;width:103px">0</div></div>
<div class="row" style="top:140px"><div class="c n" style="left:43px;width:103px">130100</div><div class="c n d" style="left:147px;width:103px">2011/1/4</div><div class="c t" style="left:251px;width:103px">石家庄</div><div class="c t" style="left:355px;width:103px">河北省</div><div class="c t" style="left:459px;width:103px">东部</div><div class="c n" style="left:563px;width:103px">0</div><div class="c t" style="left:667px;width:103px">数字化</div><div class="c n" style="left:771px;width:103px">57</div><div class="c n" style="left:979px;width:103px">57</div><div class="c n" style="left:1083px;width:103px">0</div></div>
<div class="row" style="top:168px"><div class="c n" style="left:43px;width:103px">130100</div><div class="c n d" style="left:147px;width:103px">2011/1/5</div><div class="c t" style="left:251px;width:103px">石家庄</div><div class="c t" style="left:355px;width:103px">河北省</div><div class="c t" style="left:459px;width:103px">东部</div><div class="c n" style="left:563px;width:103px">0</div><div class="c t" style="left:667px;width:103px">数字化</div><div class="c n" style="left:771px;width:103px">0</div><div class="c n" style="left:979px;width:103px">0</div><div class="c n" style="left:1083px;width:103px">0</div></div>
<div class="row" style="top:196px"><div class="c n" style="left:43px;width:103px">130100</div><div class="c n d" style="left:147px;width:103px">2011/1/6</div><div class="c t" style="left:251px;width:103px">石家庄</div><div class="c t" style="left:355px;width:103px">河北省</div><div class="c t" style="left:459px;width:103px">东部</div><div class="c n" style="left:563px;width:103px">0</div><div class="c t" style="left:667px;width:103px">数字化</div><div class="c n" style="left:771px;width:103px">0</div><div class="c n" style="left:979px;width:103px">0</div><div class="c n" style="left:1083px;width:103px">0</div></div>
<div class="row" style="top:224px"><div class="c n" style="left:43px;width:103px">130100</div><div class="c n d" style="left:147px;width:103px">2011/1/7</div><div class="c t" style="left:251px;width:103px">石家庄</div><div class="c t" style="left:355px;width:103px">河北省</div><div class="c t" style="left:459px;width:103px">东部</div><div class="c n" style="left:563px;width:103px">0</div><div class="c t" style="left:667px;width:103px">数字化</div><div class="c n" style="left:771px;width:103px">0</div><div class="c n" style="left:979px;width:103px">0</div><div class="c n" style="left:1083px;width:103px">0</div></div>
<div class="row" style="top:252px"><div class="c n" style="left:43px;width:103px">130100</div><div class="c n d" style="left:147px;width:103px">2011/1/8</div><div class="c t" style="left:251px;width:103px">石家庄</div><div class="c t" style="left:355px;width:103px">河北省</div><div class="c t" style="left:459px;width:103px">东部</div><div class="c n" style="left:563px;width:103px">0</div><div class="c t" style="left:667px;width:103px">数字化</div><div class="c n" style="left:771px;width:103px">0</div><div class="c n" style="left:979px;width:103px">0</div><div class="c n" style="left:1083px;width:103px">0</div></div>
<div class="row" style="top:280px"><div class="c n" style="left:43px;width:103px">130100</div><div class="c n d" style="left:147px;width:103px">2011/1/9</div><div class="c t" style="left:251px;width:103px">石家庄</div><div class="c t" style="left:355px;width:103px">河北省</div><div class="c t" style="left:459px;width:103px">东部</div><div class="c n" style="left:563px;width:103px">0</div><div class="c t" style="left:667px;width:103px">数字化</div><div class="c n" style="left:771px;width:103px">0</div><div class="c n" style="left:979px;width:103px">0</div><div class="c n" style="left:1083px;width:103px">0</div></div>
<div class="row" style="top:308px"><div class="c n" style="left:43px;width:103px">130100</div><div class="c n h" style="left:147px;width:103px">#######</div><div class="c t" style="left:251px;width:103px">石家庄</div><div class="c t" style="left:355px;width:103px">河北省</div><div class="c t" style="left:459px;width:103px">东部</div><div class="c n" style="left:563px;width:103px">0</div><div class="c t" style="left:667px;width:103px">数字化</div><div class="c n" style="left:771px;width:103px">0</div><div class="c n" style="left:979px;width:103px">0</div><div class="c n" style="left:1083px;width:103px">0</div></div>
<div class="row" style="top:336px"><div class="c n" style="left:43px;width:103px">130100</div><div class="c n h" style="left:147px;width:103px">#######</div><div class="c t" style="left:251px;width:103px">石家庄</div><div class="c t" style="left:355px;width:103px">河北省</div><div class="c t" style="left:459px;width:103px">东部</div><div class="c n" style="left:563px;width:103px">0</div><div class="c t" style="left:667px;width:103px">数字化</div><div class="c n" style="left:771px;width:103px">0</div><div class="c n" style="left:979px;width:103px">0</div><div class="c n" style="left:1083px;width:103px">0</div></div>
<div class="row" style="top:364px"><div class="c n" style="left:43px;width:103px">130100</div><div class="c n h" style="left:147px;width:103px">#######</div><div class="c t" style="left:251px;width:103px">石家庄</div><div class="c t" style="left:355px;width:103px">河北省</div><div class="c t" style="left:459px;width:103px">东部</div><div class="c n" style="left:563px;width:103px">0</div><div class="c t" style="left:667px;width:103px">数字化</div><div class="c n" style="left:771px;width:103px">0</div><div class="c n" style="left:979px;width:103px">0</div><div class="c n" style="left:1083px;width:103px">0</div></div>
<div class="row" style="top:392px"><div class="c n" style="left:43px;width:103px">130100</div><div class="c n h" style="left:147px;width:103px">#######</div><div class="c t" style="left:251px;width:103px">石家庄</div><div class="c t" style="left:355px;width:103px">河北省</div><div class="c t" style="left:459px;width:103px">东部</div><div class="c n" style="left:563px;width:103px">0</div><div class="c t" style="left:667px;width:103px">数字化</div><div class="c n" style="left:771px;width:103px">0</div><div class="c n" style="left:979px;width:103px">0</div><div class="c n" style="left:1083px;width:103px">0</div></div>
<div class="row" style="top:420px"><div class="c n" style="left:43px;width:103px">130100</div><div class="c n h" style="left:147px;width:103px">#######</div><div class="c t" style="left:251px;width:103px">石家庄</div><div class="c t" style="left:355px;width:103px">河北省</div><div class="c t" style="left:459px;width:103px">东部</div><div class="c n" style="left:563px;width:103px">0</div><div class="c t" style="left:667px;width:103px">数字化</div><div class="c n" style="left:771px;width:103px">0</div><div class="c n" style="left:979px;width:103px">0</div><div class="c n" style="left:1083px;width:103px">0</div></div>
<div class="row" style="top:448px"><div class="c n" style="left:43px;width:103px">130100</div><div class="c n h" style="left:147px;width:103px">#######</div><div class="c t" style="left:251px;width:103px">石家庄</div><div class="c t" style="left:355px;width:103px">河北省</div><div class="c t" style="left:459px;width:103px">东部</div><div class="c n" style="left:563px;width:103px">0</div><div class="c t" style="left:667px;width:103px">数字化</div><div class="c n" style="left:771px;width:103px">57</div><div class="c n" style="left:979px;width:103px">57</div><div class="c n" style="left:1083px;width:103px">0</div></div>
<div class="row" style="top:476px"><div class="c n" style="left:43px;width:103px">130100</div><div class="c n h" style="left:147px;width:103px">#######</div><div class="c t" style="left:251px;width:103px">石家庄</div><div class="c t" style="left:355px;width:103px">河北省</div><div class="c t" style="left:459px;width:103px">东部</div><div class="c n" style="left:563px;width:103px">0</div><div class="c t" style="left:667px;width:103px">数字化</div><div class="c n" style="left:771px;width:103px">0</div><div class="c n" style="left:979px;width:103px">0</div><div class="c n" style="left:1083px;width:103px">0</div></div>
<div class="row" style="top:504px"><div class="c n" style="left:43px;width:103px">130100</div><div class="c n h" style="left:147px;width:103px">#######</div><div class="c t" style="left:251px;width:103px">石家庄</div><div class="c t" style="left:355px;width:103px">河北省</div><div class="c t" style="left:459px;width:103px">东部</div><div class="c n" style="left:563px;width:103px">0</div><div class="c t" style="left:667px;width:103px">数字化</div><div class="c n" style="left:771px;width:103px">0</div><div class="c n" style="left:979px;width:103px">0</div><div class="c n" style="left:1083px;width:103px">0</div></div>
<div class="row" style="top:532px"><div class="c n" style="left:43px;width:103px">130100</div><div class="c n h" style="left:147px;width:103px">#######</div><div class="c t" style="left:251px;width:103px">石家庄</div><div class="c t" style="left:355px;width:103px">河北省</div><div class="c t" style="left:459px;width:103px">东部</div><div class="c n" style="left:563px;width:103px">0</div><div class="c t" style="left:667px;width:103px">数字化</div><div class="c n" style="left:771px;width:103px">0</div><div class="c n" style="left:979px;width:103px">0</div><div class="c n" style="left:1083px;width:103px">0</div></div>
<div id="rowhdr"><div class="rh" style="top:0px">1</div><div class="rh" style="top:28px">2</div><div class="rh" style="top:56px">3</div><div class="rh" style="top:84px">4</div><div class="rh" style="top:112px">5</div><div class="rh" style="top:140px">6</div><div class="rh" style="top:168px">7</div><div class="rh" style="top:196px">8</div><div class="rh" style="top:224px">9</div><div class="rh" style="top:252px">10</div><div class="rh" style="top:280px">11</div><div class="rh" style="top:308px">12</div><div class="rh" style="top:336px">13</div><div class="rh" style="top:364px">14</div><div class="rh" style="top:392px">15</div><div class="rh" style="top:420px">16</div><div class="rh" style="top:448px">17</div><div class="rh" style="top:476px">18</div><div class="rh" style="top:504px">19</div></div>
</div>

<div id="tabbar">
<svg style="left:28.5px;top:10px" width="42" height="12" viewBox="0 0 42 12" fill="#c2c2c2"><path d="M6.5 0v11.5L0 5.7ZM34.5 0v11.5l6.5-5.8Z"/></svg>
<div class="abs" style="left:115px;top:-1px;width:513px;height:30px;background:#fff;border-bottom:2px solid #217346;border-left:1px solid #ababab;border-right:1px solid #ababab"></div>
<div class="abs" style="left:128px;top:-1px;font-size:20px;line-height:27px;color:#217346;white-space:nowrap;width:487px;overflow:hidden">城市数字经济关注度百度指数日度数据<span style="letter-spacing:.8px">(2011.1-2022.1</span></div>
<svg style="left:666px;top:5px" width="22" height="22" viewBox="0 0 22 22" fill="none" stroke="#6a6a6a" stroke-width="1.3"><circle cx="11" cy="11" r="10.2"/><path d="M11 6.3v9.4M6.3 11h9.4" stroke-width="1.9"/></svg>
<svg style="left:1147px;top:8px" width="4" height="16" viewBox="0 0 4 16" fill="#b0b0b0"><rect x=".5" y="0" width="3" height="3"/><rect x=".5" y="6.2" width="3" height="3"/><rect x=".5" y="12.4" width="3" height="3"/></svg>
<div class="abs" style="left:1167px;top:3px;width:717px;height:25px;background:#f0f0f0"></div>
<div class="box" style="left:1167px;top:3px;width:25px;height:25px;border-color:#ababab"></div>
<svg style="left:1175px;top:9px" width="8" height="13" viewBox="0 0 8 13"><path d="M7.5 0v13L0 6.5Z" fill="#222"/></svg>
<div class="box" style="left:1191px;top:3px;width:636px;height:25px;border-color:#9b9b9b"></div>
<div class="box" style="left:1866px;top:3px;width:25px;height:25px;border-color:#ababab"></div>
<svg style="left:1874px;top:9px" width="8" height="13" viewBox="0 0 8 13"><path d="M.5 0v13L8 6.5Z" fill="#222"/></svg>
</div>
<div id="status">
<div class="abs" style="left:1466px;top:-1px;width:60px;height:10px;background:#c6c6c6"></div>
<svg style="left:1486px;top:6.5px" width="140" height="4" viewBox="0 0 140 4" fill="none" stroke="#6a6a6a" stroke-width="1.2"><path d="M.5 4V.5h19V4M7 .5V4M13 .5V4M60.5 4V.5h18V4M120.5 4V.5h18V4M126.5 .5V4M132.5 .5V4"/></svg>
<div class="abs" style="left:1745px;top:7px;width:6px;height:4px;background:#444"></div>
<div class="abs" style="left:11px;top:7px;font-size:17px;line-height:20px;color:#333;white-space:nowrap">就绪&nbsp;&nbsp;&nbsp;&nbsp;&nbsp;辅助功能: 调查</div>
</div>

</body>
</html>
